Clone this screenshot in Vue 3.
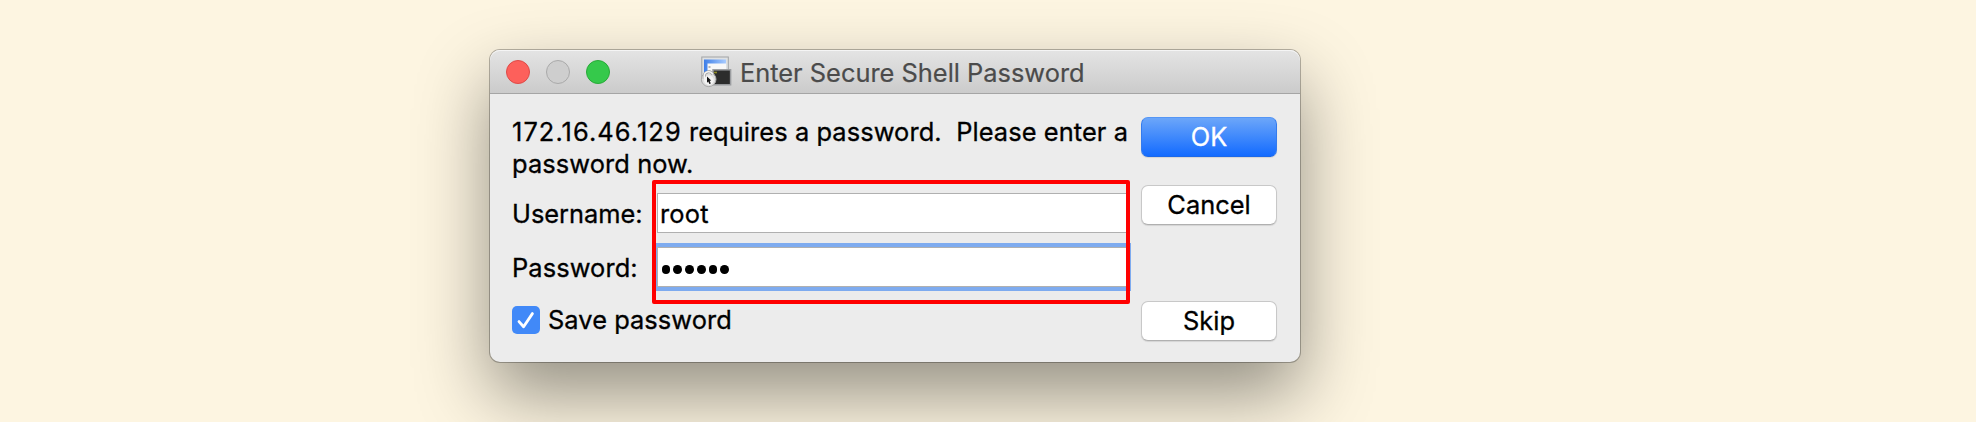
<script setup>
import { ref } from 'vue'

const username = ref('root')
const passwordLength = 6
const save = ref(true)
</script>

<template>
  <main class="desktop">
    <section class="window">
      <header class="titlebar">
        <div class="lights">
          <i class="light close"></i>
          <i class="light minimize"></i>
          <i class="light zoom"></i>
        </div>
        <svg class="app-icon" width="34" height="34" viewBox="0 0 34 34">
          <defs>
            <linearGradient id="screen" x1="0" y1="0" x2="1" y2="0">
              <stop offset="0" stop-color="#3d7ee8" />
              <stop offset="1" stop-color="#a9ccff" />
            </linearGradient>
          </defs>
          <rect x="1.8" y="2" width="26.5" height="24" fill="#dfe1e3" stroke="#a2a4a6" />
          <rect x="4" y="4.5" width="22" height="18" fill="url(#screen)" />
          <rect x="7.5" y="8.5" width="18.5" height="14" fill="#f8f8f8" />
          <path d="M8.5 12h2" stroke="#777" />
          <rect x="13" y="14.8" width="17.6" height="15" fill="#2c2c2c" stroke="#9b9da0" stroke-width="1.5" />
          <path d="M14 17.5h3" stroke="#8d8b26" stroke-width="1.6" />
          <circle cx="8.7" cy="24.3" r="7.3" fill="#dedede" stroke="#a8a8a8" />
          <path d="M4.2 24v-3a4.5 4.5 0 0 1 8.6-1.6" fill="none" stroke="#9a9a9a" stroke-width="2.8" />
          <path d="M4.2 24v-3a4.5 4.5 0 0 1 8.6-1.6" fill="none" stroke="#f3f3f3" stroke-width="1.6" />
          <circle cx="8.9" cy="25.2" r="4.8" fill="#f4f4f4" />
          <path d="M7 21.5l4.2 4-1.5.3 1.1 2.6-1.5.6-1-2.5-1.3 1.2z" fill="#161616" />
        </svg>
        <h1 class="title">Enter Secure Shell Password</h1>
      </header>

      <div class="content">
        <form class="form" @submit.prevent>
          <p class="message">
            <span class="line first"><span class="host">172.16.46.129</span> requires a password.&nbsp; Please enter a</span>
            <span class="line second">password now.</span>
          </p>
          <div class="row user-row">
            <span class="label user-label">Username:</span>
            <div class="field"><span class="value">{{ username }}</span></div>
          </div>
          <div class="row password-row">
            <span class="label password-label">Password:</span>
            <div class="field focused">
              <i v-for="n in passwordLength" :key="n" class="dot"></i>
            </div>
          </div>
          <div class="save" @click="save = !save">
            <span class="checkbox">
              <svg v-if="save" width="28" height="28" viewBox="0 0 28 28">
                <path d="M7 15.6l4.6 5.2L20.4 7.6" fill="none" stroke="#fff" stroke-width="2.8" stroke-linecap="round" stroke-linejoin="round" />
              </svg>
            </span>
            <span class="save-text">Save password</span>
          </div>
          <div class="highlight"></div>
        </form>

        <div class="actions">
          <button class="button primary"><span class="ok">OK</span></button>
          <button class="button"><span class="cancel">Cancel</span></button>
          <button class="button skip-button"><span class="skip">Skip</span></button>
        </div>
      </div>
    </section>
  </main>
</template>

<style>
body {
  background: #fdf5e1;
  overflow: hidden;
}
</style>

<style scoped>
.desktop {
  box-sizing: border-box;
  height: 422px;
  padding: 50px 0 0 490px;
  overflow: hidden;
  background: #fdf5e1;
  font-family: Inter, "Liberation Sans", sans-serif;
  font-size: 25.4px;
  color: #000;
}

.window {
  width: 810px;
  height: 312px;
  border-radius: 10px;
  background: #ececec;
  box-shadow: 0 0 0 1px rgba(0, 0, 0, 0.27), 0 32px 72px rgba(0, 0, 0, 0.42);
}

.titlebar {
  display: flex;
  box-sizing: border-box;
  height: 44px;
  padding-left: 16px;
  border-bottom: 1px solid #a5a5a5;
  border-radius: 10px 10px 0 0;
  background: linear-gradient(#e4e4e4, #cbcbcb);
  box-shadow: inset 0 1px #f5f5f5;
}

.lights {
  display: flex;
  gap: 16px;
  padding-top: 10px;
}

.light {
  box-sizing: border-box;
  width: 24px;
  height: 24px;
  border: 1px solid;
  border-radius: 50%;
}

.close { background: #fd605b; border-color: #df4a47; }
.minimize { background: #cecece; border-color: #aaa; }
.zoom { background: #35c94b; border-color: #28aa38; }

.app-icon {
  flex: none;
  margin: 5px 0 0 90px;
}

.title {
  margin: 0 0 0 6px;
  color: #4b4b4b;
  font-size: 25.4px;
  font-weight: 400;
  line-height: 45px;
  white-space: nowrap;
  -webkit-text-stroke: 0.2px currentColor;
}

.content {
  display: flex;
  -webkit-text-stroke: 0.3px currentColor;
}

.form {
  position: relative;
  width: 651px;
  padding: 22px 0 0 22px;
  box-sizing: border-box;
}

.message {
  margin: 0;
}

.line {
  display: block;
  line-height: 32px;
  white-space: nowrap;
}

.first { letter-spacing: 0.09px; }
.second { letter-spacing: 0.1px; }
.host { letter-spacing: 1.07px; }

.row {
  display: flex;
  align-items: center;
}

.user-row { margin-top: 13px; }
.password-row { margin-top: 14px; }

.label {
  flex: none;
  width: 145px;
  white-space: nowrap;
}

.password-label { letter-spacing: 0.1px; }

.field {
  display: flex;
  align-items: center;
  box-sizing: border-box;
  width: 470px;
  height: 40px;
  padding-left: 2px;
  border: 1px solid #b0b0b0;
  background: #fff;
}

.value { letter-spacing: 0.2px; }

.focused {
  gap: 3px;
  padding: 5px 0 0 3.5px;
  box-shadow: 0 0 0 4px #7eabef;
}

.dot {
  width: 8.8px;
  height: 8.8px;
  border-radius: 50%;
  background: #000;
}

.save {
  display: flex;
  align-items: center;
  gap: 8px;
  margin-top: 17px;
}

.save-text { letter-spacing: 0.06px; }

.checkbox {
  width: 28px;
  height: 28px;
  border-radius: 5px;
  background: #4189f8;
}

.checkbox svg {
  display: block;
}

.highlight {
  position: absolute;
  left: 162px;
  top: 86px;
  box-sizing: border-box;
  width: 478px;
  height: 124px;
  border: 4px solid #f00;
  border-radius: 2px;
}

.actions {
  display: flex;
  flex-direction: column;
  gap: 28px;
  padding-top: 23px;
}

.button {
  width: 136px;
  height: 40px;
  padding: 0 0 2px;
  border: 1px solid #c8c8c8;
  border-bottom-color: #b0b0b0;
  border-radius: 7px;
  background: #fff;
  box-shadow: 0 1px 1px rgba(0, 0, 0, 0.1);
  color: #000;
  font: inherit;
}

.primary {
  border-color: #5596f5 #347bed #1c68e8;
  background: linear-gradient(#6ca6f9, #136bff);
  color: #fff;
}

.skip-button { margin-top: 48px; }
</style>
